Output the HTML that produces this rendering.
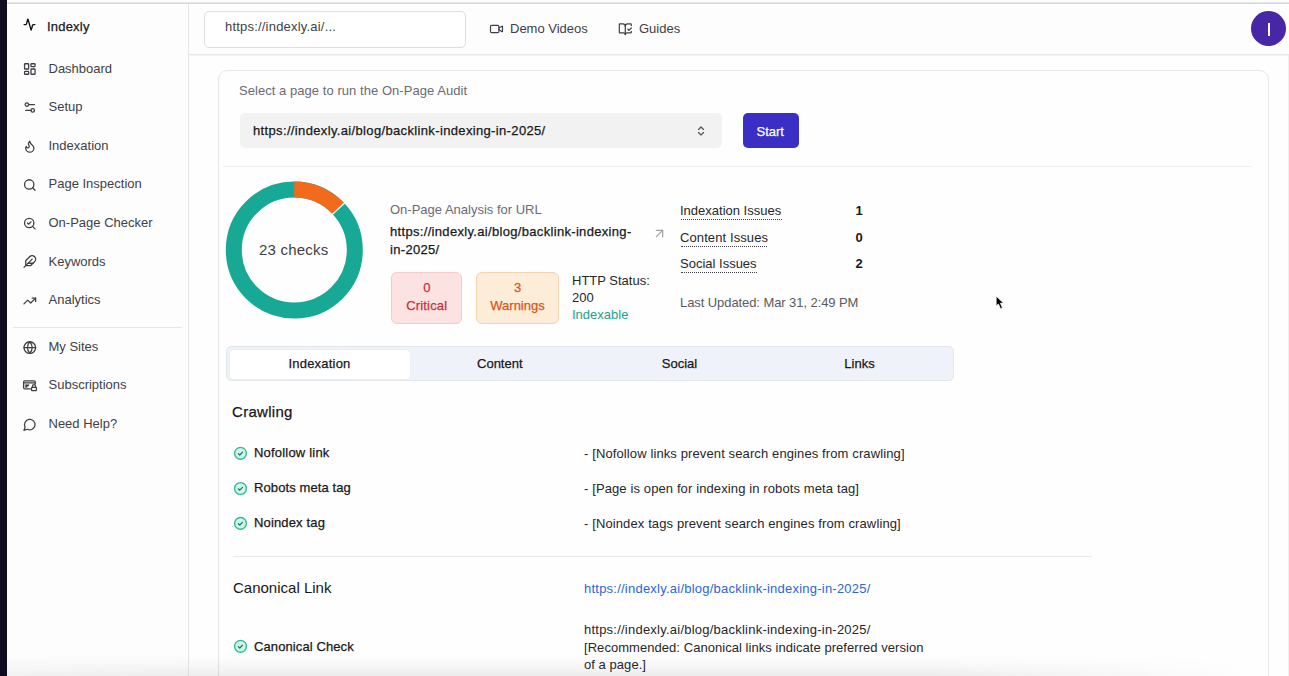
<!DOCTYPE html>
<html><head><meta charset="utf-8">
<style>
*{margin:0;padding:0;box-sizing:border-box}
html,body{width:1289px;height:676px;overflow:hidden;background:#fefefe;font-family:"Liberation Sans",sans-serif;color:#27272a}
.a{position:absolute}
.t{position:absolute;white-space:nowrap;font-size:13px;line-height:16px}
.m{-webkit-text-stroke:0.25px currentColor}
svg{position:absolute;overflow:visible}
.ic{fill:none;stroke:#3f3f46;stroke-width:1.3;stroke-linecap:round;stroke-linejoin:round}
</style></head><body>
<!-- left dark strip -->
<div class="a" style="left:0;top:0;width:7px;height:676px;background:#0e0c1d"></div>
<!-- top line -->
<div class="a" style="left:7px;top:0;width:1282px;height:2px;background:#fdfdfd"></div>
<div class="a" style="left:7px;top:2px;width:1282px;height:1px;background:#e8e8e8"></div><div class="a" style="left:7px;top:3px;width:1282px;height:1px;background:#d6d6d6"></div>
<!-- sidebar -->
<div class="a" style="left:7px;top:4px;width:182px;height:672px;background:#fdfdfd;border-right:1px solid #e6e6e6"></div>
<div class="t m" style="left:47px;top:18.6px;color:#18181b;letter-spacing:0.2px">Indexly</div>
<div class="t" style="left:48.5px;top:60.8px;color:#3f3f46">Dashboard</div>
<div class="t" style="left:48.5px;top:99px;color:#3f3f46">Setup</div>
<div class="t" style="left:48.5px;top:138px;color:#3f3f46">Indexation</div>
<div class="t" style="left:48.5px;top:176px;color:#3f3f46">Page Inspection</div>
<div class="t" style="left:48.5px;top:215px;color:#3f3f46">On-Page Checker</div>
<div class="t" style="left:48.5px;top:254px;color:#3f3f46">Keywords</div>
<div class="t" style="left:48.5px;top:292px;color:#3f3f46">Analytics</div>
<div class="a" style="left:13px;top:326.5px;width:169px;height:1px;background:#e6e6e6"></div>
<div class="t" style="left:48.5px;top:339px;color:#3f3f46">My Sites</div>
<div class="t" style="left:48.5px;top:377px;color:#3f3f46">Subscriptions</div>
<div class="t" style="left:48.5px;top:416px;color:#3f3f46">Need Help?</div>

<!-- header -->
<div class="a" style="left:189px;top:4px;width:1100px;height:51px;background:#fdfdfd;border-bottom:1px solid #e6e6e6"></div><div class="a" style="left:189px;top:55px;width:1100px;height:1px;background:#f5f5f5"></div>
<div class="a" style="left:204px;top:11px;width:262px;height:37px;border:1px solid #dedede;border-radius:5px;background:#fff"></div>
<div class="t" style="left:225px;top:19px;color:#3f3f46;letter-spacing:0.2px">https://indexly.ai/...</div>
<div class="t" style="left:510px;top:21px;color:#3f3f46">Demo Videos</div>
<div class="t" style="left:639px;top:21px;color:#3f3f46">Guides</div>
<div class="a" style="left:1251px;top:11px;width:35px;height:35px;border-radius:50%;background:#4727a6"></div>
<div class="a" style="left:1268px;top:22.5px;width:2.2px;height:13.5px;background:#fff"></div>

<!-- main card -->
<div class="a" style="left:218px;top:70px;width:1051px;height:620px;border:1px solid #e6e6e6;border-radius:9px;background:#fefefe"></div>
<div class="a" style="left:7px;top:655px;width:1282px;height:21px;background:linear-gradient(to bottom, rgba(0,0,0,0), rgba(0,0,0,0.025) 45%, rgba(0,0,0,0.065));-webkit-mask-image:linear-gradient(to right, rgba(0,0,0,.7) 0%, #000 20%, #000 72%, rgba(0,0,0,0) 97%)"></div>
<div class="a" style="left:1288px;top:55px;width:1px;height:621px;background:#f0f0f0"></div>
<div class="t" style="left:239px;top:83px;color:#6b6b74;letter-spacing:0.05px">Select a page to run the On-Page Audit</div>
<div class="a" style="left:240px;top:113px;width:482px;height:35px;background:#f2f2f2;border-radius:5px"></div>
<div class="t m" style="left:253px;top:122.7px;color:#18181b;letter-spacing:0.35px">https://indexly.ai/blog/backlink-indexing-in-2025/</div>
<div class="a" style="left:743px;top:113px;width:56px;height:35px;background:#3b2ec4;border-radius:5px"></div>
<div class="t m" style="left:756.5px;top:123.5px;color:#fff">Start</div>
<div class="a" style="left:223px;top:166px;width:1029px;height:1px;background:#efefef"></div>


<!-- donut -->
<svg class="a" style="left:0;top:0" width="1289" height="676" viewBox="0 0 1289 676">
  <circle cx="294.3" cy="250" r="60.5" fill="none" stroke="#17a995" stroke-width="16"/>
  <path d="M294.3 181.5 A68.5 68.5 0 0 1 344.3 203.2 L332.6 214.1 A52.5 52.5 0 0 0 294.3 197.5 Z" fill="#f26a1a"/>
  <line x1="344.8" y1="202.7" x2="332.2" y2="214.5" stroke="#fff" stroke-width="1.2"/>
</svg>
<div class="t" style="left:259px;top:241px;font-size:15px;line-height:18px;color:#3f3f46;letter-spacing:0.2px">23 checks</div>

<!-- analysis -->
<div class="t" style="left:390px;top:202px;color:#6b6b74">On-Page Analysis for URL</div>
<div class="t m" style="left:390px;top:223px;color:#18181b;line-height:17.5px;letter-spacing:0.32px">https://indexly.ai/blog/backlink-indexing-<br>in-2025/</div>
<svg style="left:652px;top:226.2px" width="15" height="15" viewBox="0 0 24 24" fill="none" stroke="#a1a1aa" stroke-width="2" stroke-linecap="round" stroke-linejoin="round"><path d="M7 7h10v10"/><path d="M7 17 17 7"/></svg>

<div class="a" style="left:391px;top:271.5px;width:70.5px;height:52px;background:#fde2e2;border:1px solid #f6caca;border-radius:6px"></div>
<div class="t m" style="left:391.5px;top:279px;width:70.5px;text-align:center;color:#c8303a;line-height:17.5px">0<br><span style="letter-spacing:0.15px">Critical</span></div>
<div class="a" style="left:476px;top:271.5px;width:83px;height:52px;background:#fdecd8;border:1px solid #f6d4b0;border-radius:6px"></div>
<div class="t m" style="left:476px;top:279px;width:83px;text-align:center;color:#d8561a;line-height:17.5px">3<br>Warnings</div>
<div class="t" style="left:572px;top:271.5px;color:#27272a;line-height:17.2px">HTTP Status:<br>200</div>
<div class="t" style="left:572px;top:307px;color:#20a489">Indexable</div>

<!-- issues -->
<div class="t" style="left:680px;top:203px;color:#27272a">Indexation Issues</div>
<div class="t" style="left:680px;top:229.5px;color:#27272a;letter-spacing:0.1px">Content Issues</div>
<div class="t" style="left:680px;top:256px;color:#27272a">Social Issues</div>
<div class="a" style="left:681px;top:219px;width:101px;border-top:1.3px dotted #3f3f46"></div>
<div class="a" style="left:681px;top:245.5px;width:86px;border-top:1.3px dotted #3f3f46"></div>
<div class="a" style="left:681px;top:272px;width:76px;border-top:1.3px dotted #3f3f46"></div>
<div class="t" style="left:855.5px;top:203px;color:#18181b;font-weight:bold">1</div>
<div class="t" style="left:855.5px;top:229.5px;color:#18181b;font-weight:bold">0</div>
<div class="t" style="left:855.5px;top:256px;color:#18181b;font-weight:bold">2</div>
<div class="t" style="left:680px;top:295px;color:#5a5a62;letter-spacing:-0.08px">Last Updated: Mar 31, 2:49 PM</div>

<!-- tabs -->
<div class="a" style="left:225.5px;top:345.5px;width:728px;height:35px;background:#eff2f8;border:1px solid #e3e6ec;border-radius:5px"></div>
<div class="a" style="left:229.5px;top:349.5px;width:180px;height:29px;background:#fff;border-radius:4px;box-shadow:0 0 1px rgba(0,0,0,.08)"></div>
<div class="t m" style="left:229.5px;top:356px;width:180px;text-align:center;color:#18181b;letter-spacing:0.2px">Indexation</div>
<div class="t m" style="left:409.8px;top:356px;width:180px;text-align:center;color:#18181b">Content</div>
<div class="t m" style="left:589.5px;top:356px;width:180px;text-align:center;color:#18181b">Social</div>
<div class="t m" style="left:769.5px;top:356px;width:180px;text-align:center;color:#18181b">Links</div>

<!-- crawling -->
<div class="t m" style="left:232px;top:403px;font-size:15px;line-height:18px;color:#18181b;letter-spacing:0.3px">Crawling</div>
<div class="t m" style="left:254px;top:445px;color:#18181b;letter-spacing:0.2px">Nofollow link</div>
<div class="t m" style="left:254px;top:480px;color:#18181b;letter-spacing:0.1px">Robots meta tag</div>
<div class="t m" style="left:254px;top:515px;color:#18181b;letter-spacing:0.15px">Noindex tag</div>
<div class="t" style="left:584px;top:445.7px;color:#27272a;letter-spacing:0.115px">- [Nofollow links prevent search engines from crawling]</div>
<div class="t" style="left:584px;top:480.7px;color:#27272a;letter-spacing:0.115px">- [Page is open for indexing in robots meta tag]</div>
<div class="t" style="left:584px;top:515.7px;color:#27272a;letter-spacing:0.115px">- [Noindex tags prevent search engines from crawling]</div>
<div class="a" style="left:233px;top:556px;width:859px;height:1px;background:#e8e8e8"></div>

<div class="t" style="left:233px;top:578.5px;font-size:15px;line-height:18px;color:#18181b">Canonical Link</div>
<div class="t" style="left:584px;top:580.5px;color:#2d66d4;letter-spacing:0.23px">https://indexly.ai/blog/backlink-indexing-in-2025/</div>
<div class="t m" style="left:254px;top:638.5px;color:#18181b;letter-spacing:0.1px">Canonical Check</div>
<div class="t" style="left:584px;top:621px;color:#27272a;line-height:17.7px;letter-spacing:0.05px"><span style="letter-spacing:0.23px">https://indexly.ai/blog/backlink-indexing-in-2025/</span><br>[Recommended: Canonical links indicate preferred version<br>of a page.]</div>

<!-- check icons -->
<svg class="a" style="left:0;top:0" width="1289" height="676" viewBox="0 0 1289 676">
  <g fill="#cdf7ea" stroke="#38b995" stroke-width="1.4">
    <circle cx="240.5" cy="453.3" r="5.9"/>
    <circle cx="240.5" cy="488.5" r="5.9"/>
    <circle cx="240.5" cy="523.4" r="5.9"/>
    <circle cx="240.5" cy="646.3" r="5.9"/>
  </g>
  <g fill="none" stroke="#1f6f5e" stroke-width="1.2" stroke-linecap="round" stroke-linejoin="round">
    <path d="M238.3 453.6 l1.5 1.4 l2.7 -2.8"/>
    <path d="M238.3 488.8 l1.5 1.4 l2.7 -2.8"/>
    <path d="M238.3 523.7 l1.5 1.4 l2.7 -2.8"/>
    <path d="M238.3 646.6 l1.5 1.4 l2.7 -2.8"/>
  </g>
</svg>

<!-- icons -->
<svg class="a" style="left:0;top:0" width="1289" height="676" viewBox="0 0 1289 676">
<g transform="translate(23.00,18.10) scale(0.5417)" fill="none" stroke="#111114" stroke-width="2.5" stroke-linecap="round" stroke-linejoin="round"><path d="M22 12h-2.48a2 2 0 0 0-1.93 1.46l-2.35 8.36a.25.25 0 0 1-.48 0L9.24 2.18a.25.25 0 0 0-.48 0l-2.35 8.36A2 2 0 0 1 4.49 12H2"/></g>
<g transform="translate(22.80,62.00) scale(0.5833)" fill="none" stroke="#3f3f46" stroke-width="2.2" stroke-linecap="round" stroke-linejoin="round"><rect width="7" height="9" x="3" y="3" rx="1"/><rect width="7" height="5" x="14" y="3" rx="1"/><rect width="7" height="9" x="14" y="12" rx="1"/><rect width="7" height="5" x="3" y="16" rx="1"/></g>
<g transform="translate(22.80,100.50) scale(0.5833)" fill="none" stroke="#3f3f46" stroke-width="2.2" stroke-linecap="round" stroke-linejoin="round"><path d="M20 7h-9"/><path d="M14 17H5"/><circle cx="17" cy="17" r="3"/><circle cx="7" cy="7" r="3"/></g>
<g transform="translate(22.80,139.40) scale(0.5833)" fill="none" stroke="#3f3f46" stroke-width="2.2" stroke-linecap="round" stroke-linejoin="round"><path d="M8.5 14.5A2.5 2.5 0 0 0 11 12c0-1.38-.5-2-1-3-1.072-2.143-.224-4.054 2-6 .5 2.5 2 4.9 4 6.5 2 1.6 3 3.5 3 5.5a7 7 0 1 1-14 0c0-1.153.433-2.294 1-3a2.5 2.5 0 0 0 2.5 2.5z"/></g>
<g transform="translate(22.80,178.00) scale(0.5833)" fill="none" stroke="#3f3f46" stroke-width="2.2" stroke-linecap="round" stroke-linejoin="round"><circle cx="11" cy="11" r="8"/><path d="m21 21-4.3-4.3"/></g>
<g transform="translate(22.80,216.60) scale(0.5833)" fill="none" stroke="#3f3f46" stroke-width="2.2" stroke-linecap="round" stroke-linejoin="round"><path d="m8 11 2 2 4-4"/><circle cx="11" cy="11" r="8"/><path d="m21 21-4.3-4.3"/></g>
<g transform="translate(22.80,254.50) scale(0.5833)" fill="none" stroke="#3f3f46" stroke-width="2.2" stroke-linecap="round" stroke-linejoin="round"><path d="M12.67 19a2 2 0 0 0 1.416-.588l6.154-6.172a6 6 0 0 0-8.49-8.49L5.586 9.914A2 2 0 0 0 5 11.328V18a1 1 0 0 0 1 1z"/><path d="M16 8 2 22"/><path d="M17.5 15H9"/></g>
<g transform="translate(22.80,294.00) scale(0.5833)" fill="none" stroke="#3f3f46" stroke-width="2.2" stroke-linecap="round" stroke-linejoin="round"><polyline points="22 7 13.5 15.5 8.5 10.5 2 17"/><polyline points="16 7 22 7 22 13"/></g>
<g transform="translate(22.80,340.60) scale(0.5833)" fill="none" stroke="#3f3f46" stroke-width="2.2" stroke-linecap="round" stroke-linejoin="round"><circle cx="12" cy="12" r="10"/><path d="M12 2a14.5 14.5 0 0 0 0 20 14.5 14.5 0 0 0 0-20"/><path d="M2 12h20"/></g>
<g transform="translate(22.80,379.30) scale(0.5833)" fill="none" stroke="#3f3f46" stroke-width="2.2" stroke-linecap="round" stroke-linejoin="round"><path d="M13 16.4H3.4a2 2 0 0 1-2-2V4.8a2 2 0 0 1 2-2h16a2 2 0 0 1 2 2v3"/><path d="M1.6 6.2h19.6"/><path d="M5 9.2h5.2v2.4H7.4v2.2H5z" fill="#3f3f46" stroke-width="1"/><rect x="15" y="14" width="8.4" height="5.4" rx="1.2"/><path d="M16.6 14v-2.2a2.6 2.6 0 0 1 5.2 0V14"/></g>
<g transform="translate(22.80,417.60) scale(0.5833)" fill="none" stroke="#3f3f46" stroke-width="2.2" stroke-linecap="round" stroke-linejoin="round"><path d="M7.9 20A9 9 0 1 0 4 16.1L2 22Z"/></g>
<g transform="translate(489.30,21.80) scale(0.6000)" fill="none" stroke="#3f3f46" stroke-width="2.0" stroke-linecap="round" stroke-linejoin="round"><path d="m16 13 5.223 3.482a.5.5 0 0 0 .777-.416V7.87a.5.5 0 0 0-.752-.432L16 10.5"/><rect x="2" y="6" width="14" height="12" rx="2"/></g>
<g transform="translate(618.10,22.00) scale(0.6000)" fill="none" stroke="#3f3f46" stroke-width="2.0" stroke-linecap="round" stroke-linejoin="round"><path d="M12 21V7"/><path d="m16 12 2 2 4-4"/><path d="M22 6V4a1 1 0 0 0-1-1h-5a4 4 0 0 0-4 4 4 4 0 0 0-4-4H3a1 1 0 0 0-1 1v13a1 1 0 0 0 1 1h6a3 3 0 0 1 3 3 3 3 0 0 1 3-3h6a1 1 0 0 0 1-1v-1.3"/></g>
<g transform="translate(695.00,124.90) scale(0.5000)" fill="none" stroke="#5a5a62" stroke-width="2.7" stroke-linecap="round" stroke-linejoin="round"><path d="m7 15 5 5 5-5"/><path d="m7 9 5-5 5 5"/></g>
</svg>
<!-- cursor -->
<svg style="left:996px;top:296px" width="12" height="16" viewBox="0 0 12 16"><path d="M0.2 0.2 L0.2 9.9 L2.4 7.9 L4.5 12.7 L6.4 11.9 L4.4 7.2 L7.5 7.1 Z" fill="#000" stroke="#fff" stroke-width="0.7" stroke-linejoin="round"/></svg>

</body></html>
